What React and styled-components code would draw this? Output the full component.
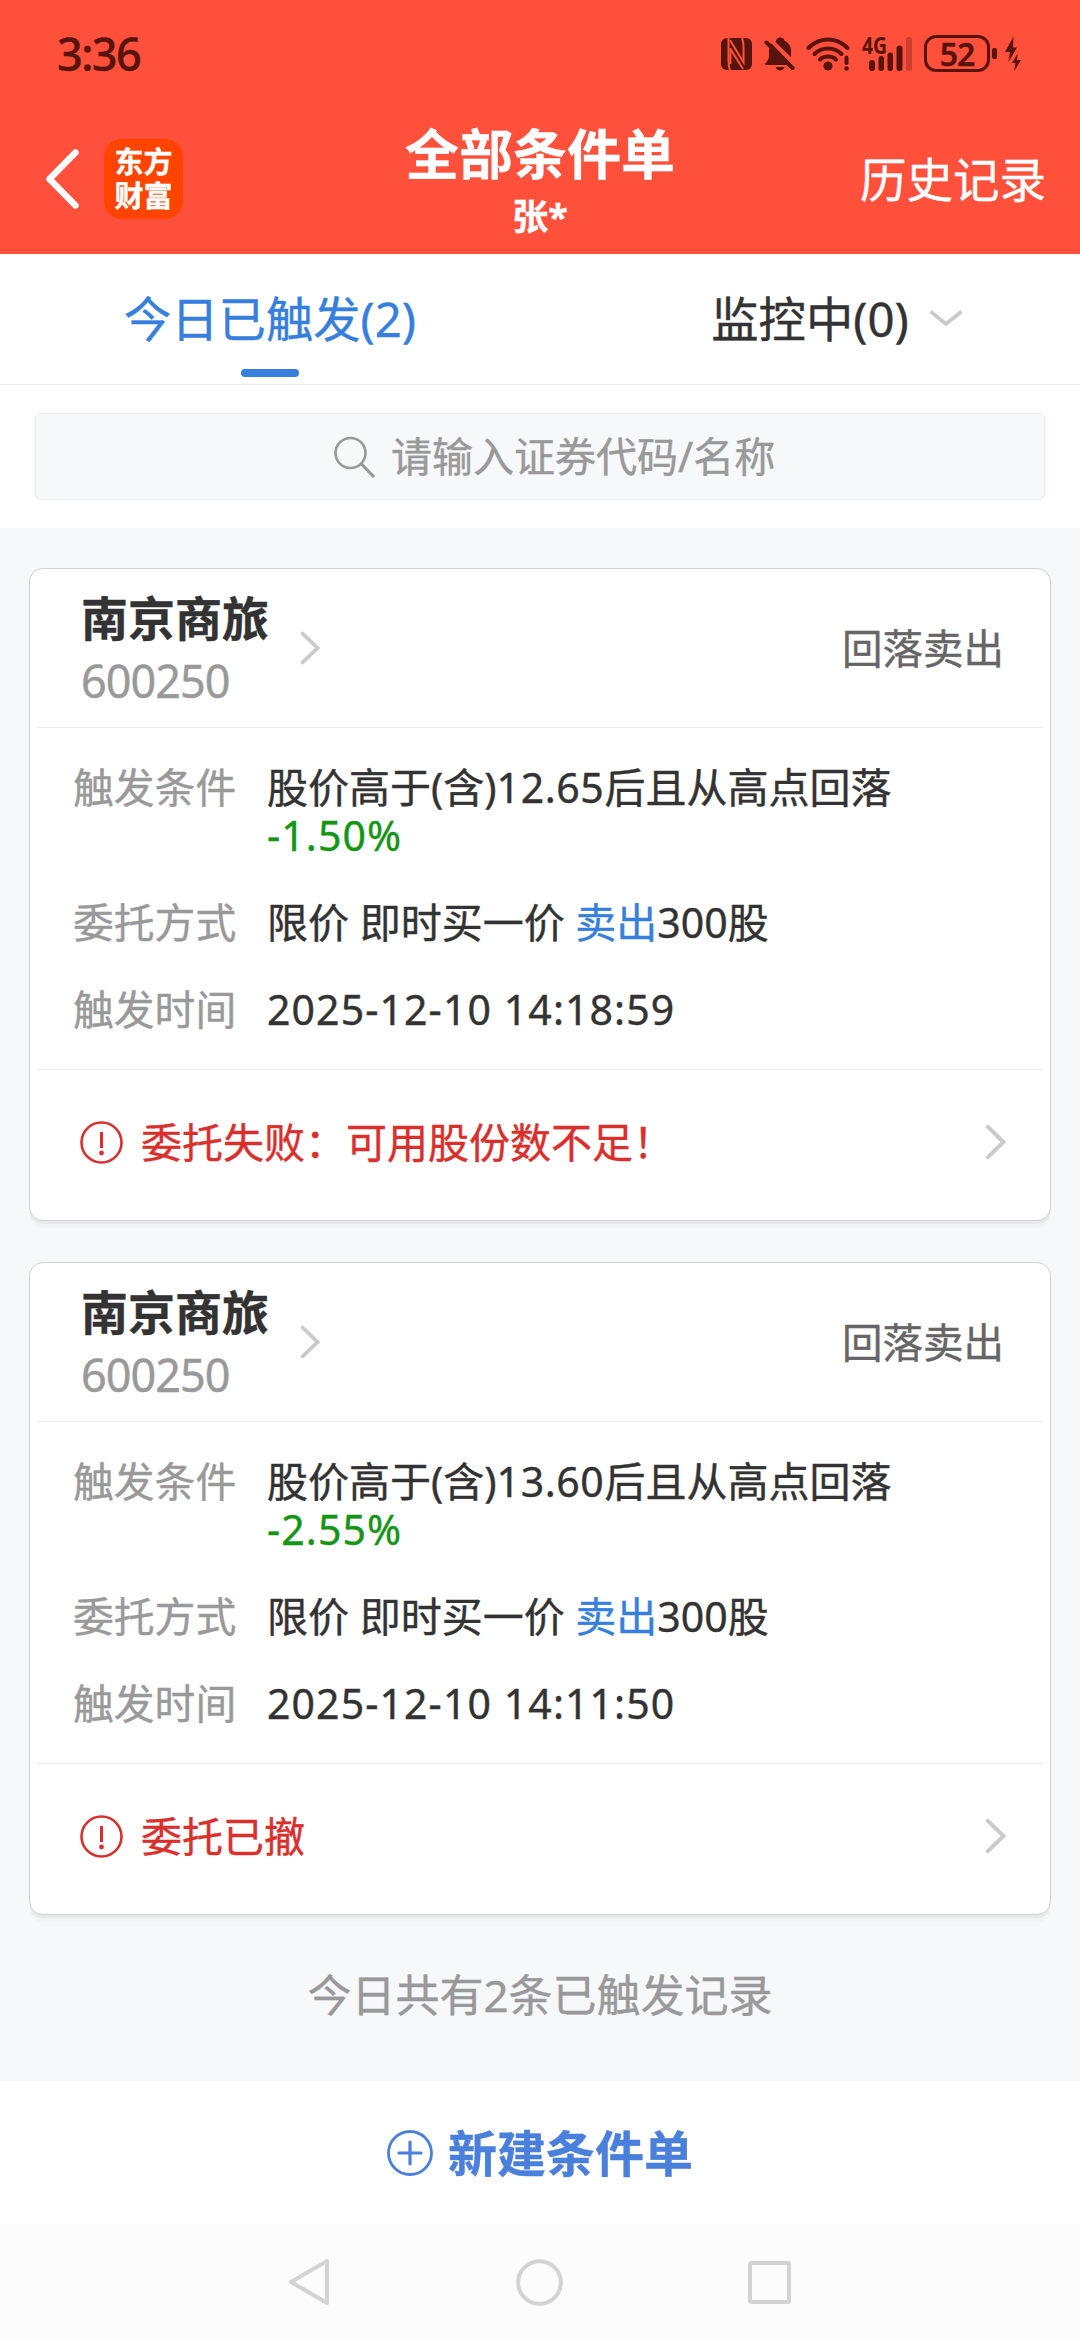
import styled, { createGlobalStyle } from "styled-components";

const colors = {
  header: "#ff503b",
  status: "#57130c",
  blue: "#377fdc",
  text: "#333333",
  grey: "#999999",
  line: "#ececee",
  page: "#f6f8fa",
  red: "#d92f2d",
  green: "#159515",
  arrow: "#cacaca",
};

const GlobalStyle = createGlobalStyle`
  * {
    box-sizing: border-box;
  }

  body {
    margin: 0;
    background-color: ${colors.page};
    color: ${colors.text};
    font-family: "Noto Sans", "Noto Sans CJK SC", sans-serif;
    -webkit-text-stroke: 0.4px;
  }

  svg {
    display: block;
    flex-shrink: 0;
  }
`;

const Screen = styled.div`
  width: 1080px;
  height: 2340px;
  display: flex;
  flex-direction: column;
  overflow: hidden;
`;

const Header = styled.header`
  height: 254px;
  flex-shrink: 0;
  background-color: ${colors.header};
`;

const StatusBar = styled.div`
  height: 107px;
  padding: 0 59px 0 57px;
  display: flex;
  align-items: center;
  justify-content: space-between;
  color: ${colors.status};
`;

const Clock = styled.span`
  font-size: 45px;
  font-weight: 500;
  line-height: 60px;
  letter-spacing: -1.6px;
`;

const StatusIcons = styled.div`
  display: flex;
  align-items: center;
`;

const Battery = styled.div`
  width: 66px;
  height: 37px;
  margin-left: 12px;
  border: 3px solid ${colors.status};
  border-radius: 12px;
  font-size: 32px;
  font-weight: 600;
  line-height: 31px;
  letter-spacing: -1px;
  text-align: center;
`;

const BatteryTip = styled.div`
  width: 5px;
  height: 11px;
  margin: 0 8px 0 2px;
  border-radius: 2px;
  background-color: ${colors.status};
`;

const TitleBar = styled.div`
  height: 147px;
  padding: 0 45px 3px;
  display: grid;
  grid-template-columns: 1fr auto 1fr;
  align-items: center;
  color: white;
`;

const TitleLeft = styled.div`
  display: flex;
  align-items: center;
  gap: 24px;
`;

const Logo = styled.div`
  width: 79px;
  height: 80px;
  padding-top: 6px;
  border-radius: 18px;
  background-color: #ff4400;
  font-size: 29px;
  font-weight: 700;
  line-height: 34px;
  text-align: center;
`;

const TitleText = styled.div`
  padding-top: 5px;
`;

const Title = styled.h1`
  margin: 0;
  font-size: 54px;
  font-weight: 700;
  line-height: 70px;
  text-align: center;
`;

const SubTitle = styled.div`
  height: 56px;
  font-size: 36px;
  font-weight: 700;
  line-height: 56px;
  text-align: center;
`;

const HistoryLink = styled.span`
  justify-self: end;
  margin-right: -11px;
  font-size: 46.5px;
  line-height: 60px;
`;

const Tabs = styled.nav`
  height: 131px;
  flex-shrink: 0;
  display: grid;
  grid-template-columns: 1fr 1fr;
  background-color: white;
  border-bottom: 1px solid ${colors.line};
`;

const Tab = styled.div`
  position: relative;
  display: flex;
  justify-content: center;
  padding-top: 35px;
  font-size: 47.3px;
  line-height: 60px;
  color: ${({ $active }) => ($active ? colors.blue : colors.text)};

  &::after {
    content: "";
    display: ${({ $active }) => ($active ? "block" : "none")};
    position: absolute;
    left: 241px;
    bottom: 7px;
    width: 58px;
    height: 8px;
    border-radius: 4px;
    background-color: ${colors.blue};
  }

  svg {
    margin: 21px -54px 0 20px;
  }
`;

const SearchArea = styled.div`
  height: 143px;
  flex-shrink: 0;
  padding: 28px 35px;
  background-color: white;
`;

const SearchBox = styled.div`
  height: 87px;
  display: flex;
  align-items: center;
  padding-left: 298px;
  gap: 15px;
  border: 1px solid ${colors.line};
  border-radius: 6px;
  background-color: ${colors.page};
  color: ${colors.grey};
  font-size: 41px;
  line-height: 60px;
`;

const Placeholder = styled.span`
  padding-bottom: 2px;
`;

const List = styled.main`
  flex: 1;
  padding: 40px 29px 0;
`;

const Card = styled.section`
  height: 653px;
  margin-bottom: 41px;
  padding: 0 7px;
  border: 1px solid #cfd1d3;
  border-radius: 14px;
  background-color: white;
  box-shadow: 0 4px 0 -1px #e6e8ea, 0 8px 0 -1px #f1f3f5;
`;

const CardHead = styled.div`
  height: 159px;
  padding: 0 39px 0 44px;
  display: flex;
  align-items: center;
  border-bottom: 1px solid ${colors.line};
`;

const Stock = styled.div`
  padding-top: 5px;
`;

const Name = styled.div`
  font-size: 47px;
  font-weight: 700;
  line-height: 60px;
`;

const Code = styled.div`
  font-size: 45px;
  line-height: 65px;
  letter-spacing: -1px;
  color: ${colors.grey};
`;

const OrderType = styled.div`
  margin-left: auto;
  padding-top: 2px;
  font-size: 40.5px;
  line-height: 50px;
  color: #666666;
`;

const CardBody = styled.div`
  height: 342px;
  padding: 35px 0 0 36px;
  display: flex;
  flex-direction: column;
  gap: 39px;
  border-bottom: 1px solid ${colors.line};
  font-size: 41px;
  line-height: 48px;
`;

const Row = styled.div`
  display: grid;
  grid-template-columns: 194px 1fr;
`;

const Label = styled.span`
  font-size: 40.8px;
  color: ${colors.grey};
`;

const Value = styled.span`
  white-space: nowrap;
`;

const Price = styled.span`
  letter-spacing: 0.6px;
`;

const Time = styled.span`
  letter-spacing: 1.1px;
`;

const Percent = styled.span`
  letter-spacing: 1.1px;
  color: ${colors.green};
`;

const Action = styled.span`
  color: ${colors.blue};
`;

const CardFoot = styled.div`
  height: 144px;
  padding: 0 36px 0 43px;
  display: flex;
  align-items: center;
  color: ${colors.red};
  font-size: 41px;
  line-height: 50px;

  svg:last-child {
    margin-left: auto;
  }
`;

const Result = styled.span`
  margin-left: 18px;
`;

const Summary = styled.p`
  margin: 0;
  padding-top: 9px;
  font-size: 44px;
  line-height: 60px;
  text-align: center;
  color: ${colors.grey};
`;

const CreateButton = styled.div`
  height: 143px;
  flex-shrink: 0;
  display: flex;
  align-items: center;
  justify-content: center;
  gap: 15px;
  background-color: white;
  color: #4a7fdc;
  font-size: 49px;
  font-weight: 700;
  line-height: 60px;
`;

const SystemNav = styled.div`
  height: 116px;
  flex-shrink: 0;
  padding: 0 289px 0 288px;
  display: flex;
  align-items: center;
  justify-content: space-between;
  background-color: #fcfcfc;
`;

const NfcIcon = () => (
  <svg width="31" height="32" viewBox="0 0 31 32">
    <rect width="31" height="32" rx="6" fill={colors.status} />
    <g fill="none" stroke={colors.header} strokeWidth="2">
      <path d="M7.5 0 V23 Q7.5 29 9 32" />
      <path d="M9 2 L22.5 24.5 V9 Q22.5 3 21 0" />
      <path d="M9.5 11 L22 31 M9.5 10 V26" />
    </g>
  </svg>
);

const MutedIcon = () => (
  <svg width="31" height="34" viewBox="0 0 31 34" style={{ marginLeft: 12 }}>
    <path
      d="M0.5 27 Q5 24 5 18 V13 Q5 9 7.5 6.5 L26 25.5 L27.5 28 H2 Z"
      fill={colors.status}
    />
    <path
      d="M11.5 5 Q12.5 0.5 16 0.5 Q19.5 0.5 20.5 3.5 Q27 7 27 14 V20 Z"
      fill={colors.status}
    />
    <path d="M11.5 30 H20.5 Q19 33.5 16 33.5 Q13 33.5 11.5 30 Z" fill={colors.status} />
    <path
      d="M2.5 5.5 L28.5 31"
      stroke={colors.status}
      strokeWidth="4"
      strokeLinecap="round"
    />
  </svg>
);

const WifiIcon = () => (
  <svg width="45" height="34" viewBox="0 0 45 34" style={{ marginLeft: 11 }}>
    <g fill="none" stroke={colors.status} strokeWidth="4" strokeLinecap="round">
      <path d="M2.5 11 Q11 2.5 22 2.5 Q33 2.5 41.5 11" />
      <path d="M8.5 17 Q14 11.5 22 11.5 Q30 11.5 35.5 17" />
      <path d="M14 22.5 Q17 19.5 22 19.5 Q27 19.5 30 22.5" />
      <path d="M40.5 20.5 V26" />
    </g>
    <circle cx="22" cy="29" r="4.6" fill={colors.status} />
    <circle cx="40.5" cy="31.5" r="2.2" fill={colors.status} />
  </svg>
);

const SignalIcon = () => (
  <svg
    width="50"
    height="34"
    viewBox="0 0 50 34"
    overflow="visible"
    style={{ marginLeft: 11 }}
  >
    <text
      x="0"
      y="17"
      fontSize="23"
      fontWeight="700"
      textLength="25"
      lengthAdjust="spacingAndGlyphs"
      fill={colors.status}
    >
      4G
    </text>
    <g fill={colors.status}>
      <rect x="7" y="23" width="6" height="11" rx="3" />
      <rect x="16.5" y="19" width="5.5" height="15" rx="2.7" />
      <rect x="25.5" y="15.5" width="5.5" height="18.5" rx="2.7" />
      <rect x="34.5" y="8.5" width="6" height="25.5" rx="3" />
      <rect x="44" y="0" width="6" height="34" rx="3" opacity="0.3" />
    </g>
  </svg>
);

const ChargeIcon = () => (
  <svg width="16" height="36" viewBox="0 0 16 36" fill={colors.status}>
    <path d="M8.5 0.5 L0 16 H5 L3.5 26 L12 11.5 H8 Z" />
    <path d="M12.5 17.5 L7 27 H10.5 L9 35.5 L16 24 H12 Z" />
  </svg>
);

const BackIcon = () => (
  <svg width="35" height="62" viewBox="0 0 35 62">
    <path
      d="M30.5 4.5 L4.5 31 L30.5 57.5"
      fill="none"
      stroke="white"
      strokeWidth="6.5"
      strokeLinecap="round"
      strokeLinejoin="round"
    />
  </svg>
);

const ArrowRight = ({ size = 36, ...rest }) => (
  <svg width={size * 0.6} height={size} viewBox="0 0 21.6 36" {...rest}>
    <path
      d="M1.6 1.6 L18.5 18 L1.6 34.4"
      fill="none"
      stroke={colors.arrow}
      strokeWidth="4"
    />
  </svg>
);

const ArrowDown = () => (
  <svg width="34" height="18" viewBox="0 0 34 18">
    <path d="M1.5 1.5 L17 14 L32.5 1.5" fill="none" stroke={colors.arrow} strokeWidth="3.6" />
  </svg>
);

const SearchIcon = () => (
  <svg width="42" height="42" viewBox="0 0 42 42" fill="none" stroke={colors.grey}>
    <circle cx="16.5" cy="17" r="15" strokeWidth="2.6" />
    <path d="M27 27.5 L40 41" strokeWidth="3.2" />
  </svg>
);

const WarnIcon = () => (
  <svg width="43" height="43" viewBox="0 0 43 43">
    <circle cx="21.5" cy="21.5" r="20" fill="none" stroke={colors.red} strokeWidth="2.6" />
    <path d="M21.5 11 V27" stroke={colors.red} strokeWidth="3" />
    <circle cx="21.5" cy="32" r="2.4" fill={colors.red} />
  </svg>
);

const PlusIcon = () => (
  <svg width="46" height="46" viewBox="0 0 46 46" fill="none" stroke="#4a7fdc">
    <circle cx="23" cy="23" r="21.5" strokeWidth="2.8" />
    <path d="M12 23 H34 M23 12 V34" strokeWidth="3.2" strokeLinecap="round" />
  </svg>
);

const orders = [
  {
    name: "南京商旅",
    code: "600250",
    type: "回落卖出",
    price: "12.65",
    percent: "-1.50%",
    amount: 300,
    time: "2025-12-10 14:18:59",
    result: "委托失败：可用股份数不足！",
  },
  {
    name: "南京商旅",
    code: "600250",
    type: "回落卖出",
    price: "13.60",
    percent: "-2.55%",
    amount: 300,
    time: "2025-12-10 14:11:50",
    result: "委托已撤",
  },
];

const OrderCard = ({ order }) => (
  <Card>
    <CardHead>
      <Stock>
        <Name>{order.name}</Name>
        <Code>{order.code}</Code>
      </Stock>
      <ArrowRight size={34} style={{ marginLeft: 31 }} />
      <OrderType>{order.type}</OrderType>
    </CardHead>
    <CardBody>
      <Row>
        <Label>触发条件</Label>
        <Value>
          股价高于(含)<Price>{order.price}</Price>后且从高点回落
          <br />
          <Percent>{order.percent}</Percent>
        </Value>
      </Row>
      <Row>
        <Label>委托方式</Label>
        <Value>
          限价 即时买一价 <Action>卖出</Action>
          {order.amount}股
        </Value>
      </Row>
      <Row>
        <Label>触发时间</Label>
        <Time>{order.time}</Time>
      </Row>
    </CardBody>
    <CardFoot>
      <WarnIcon />
      <Result>{order.result}</Result>
      <ArrowRight />
    </CardFoot>
  </Card>
);

const App = () => (
  <Screen>
    <GlobalStyle />
    <Header>
      <StatusBar>
        <Clock>3:36</Clock>
        <StatusIcons>
          <NfcIcon />
          <MutedIcon />
          <WifiIcon />
          <SignalIcon />
          <Battery>52</Battery>
          <BatteryTip />
          <ChargeIcon />
        </StatusIcons>
      </StatusBar>
      <TitleBar>
        <TitleLeft>
          <BackIcon />
          <Logo>
            东方
            <br />
            财富
          </Logo>
        </TitleLeft>
        <TitleText>
          <Title>全部条件单</Title>
          <SubTitle>张*</SubTitle>
        </TitleText>
        <HistoryLink>历史记录</HistoryLink>
      </TitleBar>
    </Header>
    <Tabs>
      <Tab $active>今日已触发(2)</Tab>
      <Tab>
        监控中(0)
        <ArrowDown />
      </Tab>
    </Tabs>
    <SearchArea>
      <SearchBox>
        <SearchIcon />
        <Placeholder>请输入证券代码/名称</Placeholder>
      </SearchBox>
    </SearchArea>
    <List>
      {orders.map((order) => (
        <OrderCard key={order.time} order={order} />
      ))}
      <Summary>今日共有2条已触发记录</Summary>
    </List>
    <CreateButton>
      <PlusIcon />
      新建条件单
    </CreateButton>
    <SystemNav>
      <svg width="42" height="48" viewBox="0 0 42 48">
        <path
          d="M39 3 V45 L3 24 Z"
          fill="none"
          stroke="#d3d3d3"
          strokeWidth="4"
          strokeLinejoin="round"
        />
      </svg>
      <svg width="47" height="47" viewBox="0 0 47 47">
        <circle cx="23.5" cy="23.5" r="21.3" fill="none" stroke="#d3d3d3" strokeWidth="4" />
      </svg>
      <svg width="43" height="43" viewBox="0 0 43 43">
        <rect
          x="2"
          y="2"
          width="39"
          height="39"
          rx="1.5"
          fill="none"
          stroke="#d3d3d3"
          strokeWidth="4"
        />
      </svg>
    </SystemNav>
  </Screen>
);

export default App;
